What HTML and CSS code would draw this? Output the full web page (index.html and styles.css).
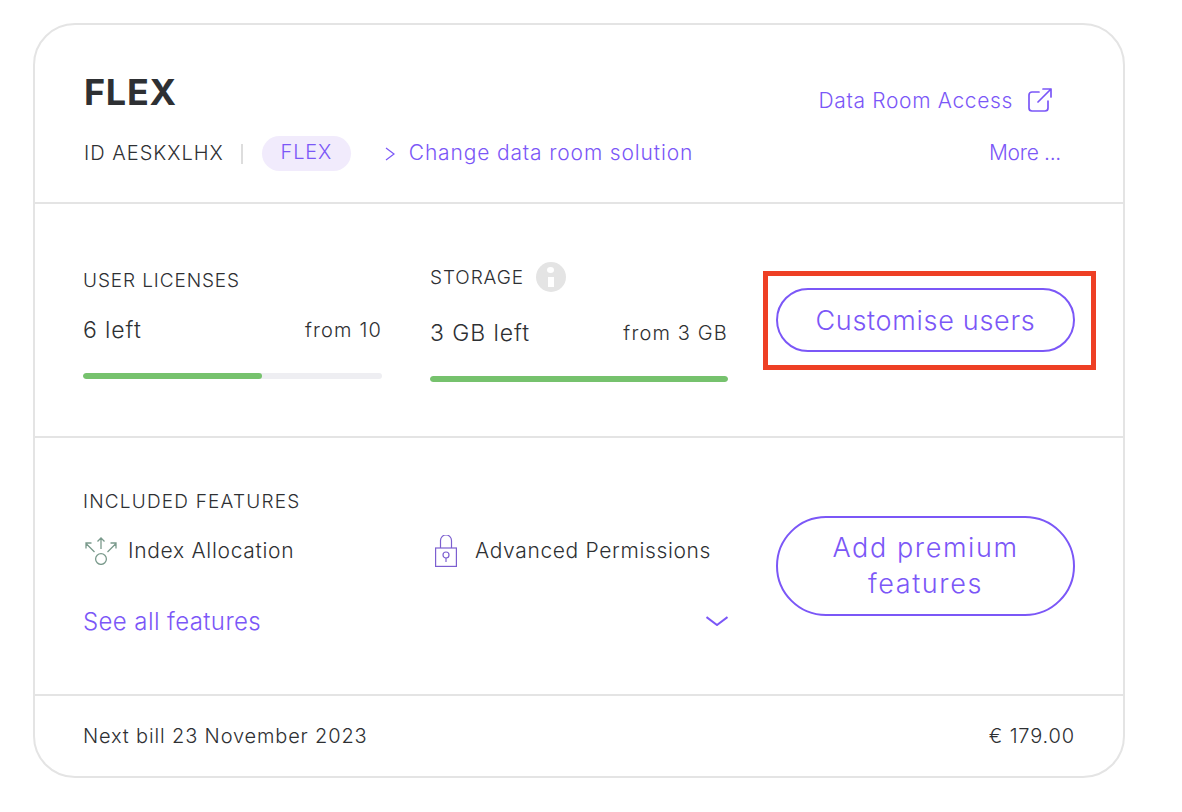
FILE: index.html
```html
<!DOCTYPE html>
<html lang="en">
<head>
<meta charset="utf-8">
<title>FLEX</title>
<link rel="stylesheet" href="styles.css">
</head>
<body>
<main class="card">
  <header class="sec head">
    <div class="head-row1">
      <h1>FLEX</h1>
      <a class="link access"><span>Data Room Access</span>
        <svg width="24" height="24" viewBox="0 0 24 24" fill="none" stroke="#7b57f7" stroke-width="1.7" stroke-linecap="round" stroke-linejoin="round"><path d="M11 4H4a3 3 0 0 0-3 3v13a3 3 0 0 0 3 3h13a3 3 0 0 0 3-3v-7"/><path d="M10 14 23 1M15 1h8v8"/></svg>
      </a>
    </div>
    <div class="head-row2">
      <span class="dark">ID AESKXLHX</span>
      <span class="sep"></span>
      <span class="pill">FLEX</span>
      <svg class="chev-r" width="10" height="14" viewBox="0 0 10 14" fill="none" stroke="#7b57f7" stroke-width="1.2"><path d="M1 1l8 6-8 6"/></svg>
      <a class="link change">Change data room solution</a>
      <a class="link more">More ...</a>
    </div>
  </header>
  <section class="sec usage">
    <div class="meter m1">
      <div class="label">USER LICENSES</div>
      <div class="vals"><span class="big">6 left</span><span class="from">from 10</span></div>
      <div class="bar"><div class="fill" style="width:60%"></div></div>
    </div>
    <div class="meter m2">
      <div class="label lab-info"><span class="lab-text">STORAGE</span> <span class="info"><i></i><b></b></span></div>
      <div class="vals"><span class="big">3 GB left</span><span class="from">from 3 GB</span></div>
      <div class="bar"><div class="fill" style="width:100%"></div></div>
    </div>
    <div class="action">
      <div class="hl"><a class="btn short">Customise users</a></div>
    </div>
  </section>
  <section class="sec feats">
    <div class="feat-main">
      <div class="label label-wide">INCLUDED FEATURES</div>
      <div class="feat-row">
        <div class="feat f1">
          <svg width="32" height="28" viewBox="0 0 32 28" fill="none" stroke="#7a9a8c" stroke-width="1.3"><circle cx="16" cy="22" r="5.4"/><path d="M16 12V1M12.5 4.5 16 1l3.500 3.500M9.500 15 1 6.500M1 11.500V6h5.500M22.500 15 31 6.500M25.500 6H31v5.500"/></svg>
          <span>Index Allocation</span>
        </div>
        <div class="feat f2">
          <svg width="22" height="32" viewBox="0 0 22 32" fill="none" stroke="#7c5fd0" stroke-width="1.2"><rect x="0.600" y="13" width="20.800" height="18.400"/><path d="M5.500 13V5.500a5.500 5.500 0 0 1 11 0V13"/><circle cx="11" cy="20" r="3"/><path d="M11 23v4"/></svg>
          <span>Advanced Permissions</span>
        </div>
      </div>
      <div class="see">
        <a class="link big-link">See all features</a>
        <svg width="22" height="10" viewBox="0 0 22 10" fill="none" stroke="#7b57f7" stroke-width="2"><path d="M0.500 1 11 9 21.500 1"/></svg>
      </div>
    </div>
    <div class="action">
      <a class="btn tall">Add premium features</a>
    </div>
  </section>
  <footer class="foot">
    <span class="bill">Next bill 23 November 2023</span>
    <span class="bill">€ 179.00</span>
  </footer>
</main>
</body>
</html>
```
FILE: styles.css
```css
* { box-sizing: border-box; }
html, body { margin: 0; padding: 0; background: #fff; }
body { width: 1182px; height: 812px; padding: 23px 0 0 33px; font-family: "Inter", "Liberation Sans", sans-serif; font-weight: 300; color: #2e3033; }
.card { width: 1092px; height: 755px; border: 2px solid #e4e4e4; border-radius: 42px; display: flex; flex-direction: column; }
.sec { border-bottom: 2px solid #e4e4e4; }
.link { color: #7b57f7; font-size: 21px; letter-spacing: 0.6px; }
h1 { margin: 0 0 2px; font-size: 36px; font-weight: 700; color: #2e3033; line-height: 44px; letter-spacing: 0.7px; }
.head { height: 179px; padding: 46px 62px 0 49px; }
.head-row1 { display: flex; justify-content: space-between; align-items: center; height: 44px; }
.access { display: flex; align-items: center; gap: 15px; margin-right: 9px; margin-top: 14px; letter-spacing: 0.65px; }
.head-row2 { display: flex; align-items: center; margin-top: 21px; height: 35px; font-size: 20px; }
.dark { letter-spacing: 1px; margin-bottom: 2px; }
.sep { width: 2px; height: 20px; background: #ddd; margin: 0 19px 0 17px; }
.pill { background: #f1ebfc; color: #7b57f7; border-radius: 18px; width: 89px; height: 35px; line-height: 33px; text-align: center; letter-spacing: 0.8px; }
.chev-r { margin: 0 14px 0 34px; flex: none; }
.change { letter-spacing: 0.85px; margin-bottom: 3px; }
.more { margin-left: auto; letter-spacing: -0.3px; margin-bottom: 3px; }
.usage { height: 234px; display: flex; padding-left: 48px; }
.meter { width: 299px; flex: none; }
.m1 { padding-top: 65px; margin-right: 48px; }
.m2 { padding-top: 58px; width: 298px; }
.label { font-size: 19px; line-height: 24px; letter-spacing: 0.9px; }
.label-wide { letter-spacing: 1.2px; }
.lab-info { display: flex; align-items: center; gap: 12px; }
.lab-text { padding-top: 1px; }
.info { width: 30px; height: 30px; border-radius: 50%; background: #e4e4e4; display: inline-flex; flex-direction: column; align-items: center; justify-content: center; gap: 4px; }
.info i { width: 7px; height: 6px; border-radius: 50%; background: #fff; }
.info b { width: 6px; height: 10px; background: #fff; }
.vals { display: flex; justify-content: space-between; align-items: center; margin-top: 22px; height: 30px; }
.m2 .vals { margin-top: 26px; }
.big { font-size: 23px; letter-spacing: 0.9px; }
.from { font-size: 20px; letter-spacing: 1.15px; }
.bar { height: 6px; border-radius: 3px; background: #eeeef2; margin-top: 28px; overflow: hidden; }
.fill { height: 100%; background: #76c26d; border-radius: 3px; }
.action { margin-left: 48px; width: 299px; flex: none; display: flex; align-items: center; }
.hl { border: 5px solid #ee3f24; margin: 0 0 0 -13px; width: 333px; height: 99px; padding: 0 0 0 8px; display: flex; align-items: center; flex: none; }
.btn { display: flex; align-items: center; justify-content: center; text-align: center; width: 299px; height: 64px; flex: none; border: 2px solid #7b57f7; border-radius: 32px; color: #7b57f7; font-size: 27px; line-height: 36px; letter-spacing: 0.7px; background: #fff; }
.short { padding-top: 2px; }
.tall { height: 100px; border-radius: 50px; padding: 0 40px; letter-spacing: 1.6px; }
.feats { height: 258px; display: flex; padding-left: 48px; }
.feat-main { width: 645px; flex: none; padding-top: 52px; }
.feat-row { display: flex; margin-top: 21px; }
.feat { display: flex; align-items: center; font-size: 21px; height: 32px; letter-spacing: 0.7px; flex: none; padding-bottom: 1px; }
.f1 { width: 352px; padding-left: 2px; gap: 11px; }
.f2 { gap: 18px; letter-spacing: 0.65px; }
.see { display: flex; justify-content: space-between; align-items: center; margin-top: 38px; height: 32px; }
.big-link { font-size: 24px; letter-spacing: 0.4px; }
.foot { flex: 1; display: flex; justify-content: space-between; align-items: center; padding: 0 48px; font-size: 20px; }
.bill { letter-spacing: 0.85px; }
```
